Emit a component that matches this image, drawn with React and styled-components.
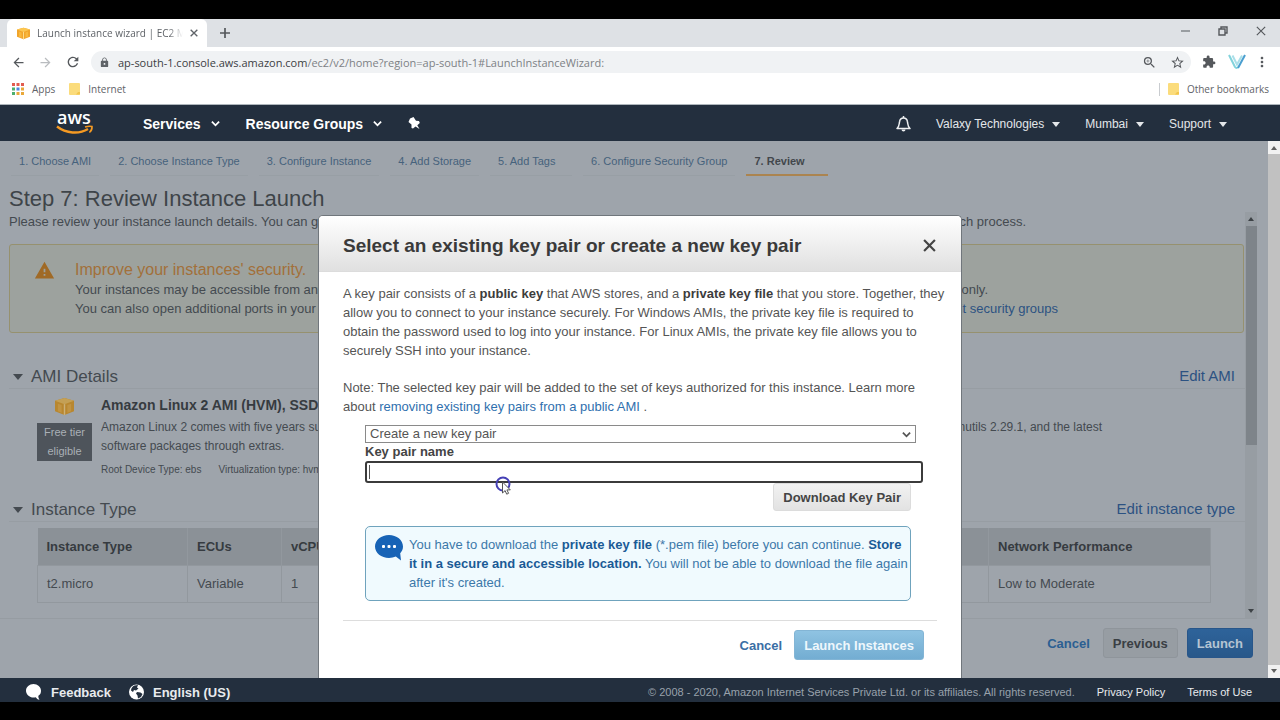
import React from 'react';
import styled, { createGlobalStyle, css } from 'styled-components';
import {
  MdArrowBack, MdArrowForward, MdRefresh, MdLock, MdZoomIn,
  MdStarBorder, MdExtension, MdMoreVert, MdWarning,
} from 'react-icons/md';

const GlobalStyle = createGlobalStyle`
  * { box-sizing: border-box; }
  html, body { margin: 0; background: #000; }
  body { font-family: "Liberation Sans", Arial, sans-serif; font-size: 13px; line-height: 19px; color: #444a50; }
  button, input, select { font-family: inherit; font-size: 13px; }
  a { text-decoration: none; color: inherit; }
  h1, h2, h3, p, ul, ol { margin: 0; padding: 0; }
  svg { display: block; flex: none; }
`;

const Page = styled.div`
  min-height: 100vh;
  display: flex;
  flex-direction: column;
  padding: 19px 0 18px;
  background: #000;
  overflow: hidden;
`;

/* Browser chrome */
const Chrome = styled.header`
  font-family: "Open Sans", "Noto Sans", sans-serif;
  font-size: 11px;
  color: #5f6368;
  background: #fff;
  border-bottom: 1px solid #aeb6bc;
`;
const TabStrip = styled.div`
  height: 28px;
  display: flex;
  background: #dee1e5;
  padding-left: 7px;
`;
const Tab = styled.div`
  width: 200px;
  height: 28px;
  display: flex;
  align-items: center;
  gap: 7px;
  padding: 0 9px 0 10px;
  background: #fff;
  border-radius: 6px 6px 0 0;
`;
const TabTitle = styled.span`
  flex: 1;
  min-width: 0;
  white-space: nowrap;
  overflow: hidden;
  font-size: 10px;
  mask-image: linear-gradient(to right, #000 90%, transparent);
`;
const IconButton = styled.button`
  display: flex;
  align-items: center;
  justify-content: center;
  width: ${(p) => p.$width || 20}px;
  height: ${(p) => p.$height || 20}px;
  padding: 0;
  border: 0;
  background: none;
  color: ${(p) => p.$color || '#55585c'};
`;
const WindowButtons = styled.div`
  margin-left: auto;
  display: flex;
  padding: 2px 0 0;
`;
const Toolbar = styled.div`
  height: 30px;
  display: flex;
  align-items: center;
  padding: 0 3px 0 5px;
`;
const NavButtons = styled.div`
  display: flex;
  width: 86px;
`;
const Address = styled.div`
  flex: 1;
  height: 22px;
  display: flex;
  align-items: center;
  gap: 8px;
  padding: 0 4px 0 8px;
  border-radius: 11px;
  background: #f0f2f4;
`;
const Url = styled.span`
  flex: 1;
  font-size: 11px;
  color: #7d8185;
  b { font-weight: 400; color: #3c4043; }
`;
const Bookmarks = styled.nav`
  height: 27px;
  display: flex;
  align-items: center;
  gap: 14px;
  padding: 0 11px 3px 12px;
  font-size: 10px;
`;
const Bookmark = styled.a`
  display: flex;
  align-items: center;
  gap: 8px;
  ${(p) => p.$end && css`
    margin-left: auto;
    border-left: 1px solid #c9ccd0;
    padding-left: 8px;
    line-height: 13px;
  `}
`;

/* AWS bar */
const AwsBar = styled.nav`
  height: 36px;
  display: flex;
  align-items: center;
  padding: 1px 53px 0 55px;
  background: #232f3e;
  color: #f2f3f3;
  font-size: 12px;
`;
const BarButton = styled.button`
  display: flex;
  align-items: center;
  gap: ${(p) => (p.$strong ? 10 : 8)}px;
  padding: 0;
  border: 0;
  background: none;
  color: ${(p) => (p.$strong ? '#fff' : '#e4e7ea')};
  font-size: ${(p) => (p.$strong ? 14 : 12)}px;
  font-weight: ${(p) => (p.$strong ? 700 : 400)};
`;
const BarLeft = styled.div`
  display: flex;
  align-items: center;
  gap: 26px;
  margin-left: 49px;
`;
const BarRight = styled.div`
  display: flex;
  align-items: center;
  gap: 25px;
  padding-top: 1px;
  margin-left: auto;
`;

/* Console body */
const Body = styled.div`
  position: relative;
  flex: 1;
  display: flex;
  background: #9ea4ab;
`;
const Console = styled.main`
  flex: 1;
  min-width: 0;
  display: flex;
  flex-direction: column;
`;
const Steps = styled.ol`
  display: flex;
  gap: 11px;
  padding: 11px 11px 0;
  list-style: none;
`;
const Step = styled.li`
  min-width: 82px;
  padding: 0 8px 3px;
  font-size: 11px;
  border-bottom: ${(p) => (p.$active ? '2px solid #ab8450' : '1px solid #989fa5')};
  font-weight: ${(p) => (p.$active ? 700 : 400)};
  color: ${(p) => (p.$active ? '#42474c' : '#46627c')};
`;
const Title = styled.h1`
  padding: 9px 9px 0;
  font-size: 22px;
  line-height: 27px;
  font-weight: 400;
  color: #3e4449;
`;
const ScrollArea = styled.div`
  flex: 1;
  display: flex;
  margin-right: 11px;
  border-bottom: 1px solid #969ca2;
`;
const Scrolled = styled.div`
  flex: 1;
  min-width: 0;
`;
const SplitLine = styled.p`
  display: flex;
  justify-content: space-between;
  white-space: nowrap;
  font-size: ${(p) => p.$size || 13}px;
  padding-right: ${(p) => p.$end || 0}px;
`;
const Intro = styled.div`
  padding-left: 9px;
`;
const Warning = styled.section`
  display: flex;
  gap: 20px;
  margin: 13px 1px 0 9px;
  padding: 15px 0 13px 24px;
  min-height: 89px;
  border: 1px solid #96916f;
  border-radius: 3px;
  background: #9da29e;
`;
const WarningText = styled.div`
  flex: 1;
  h2 { font-size: 16px; line-height: 20px; font-weight: 400; color: #a2703a; }
`;
const BlueLink = styled.a`
  color: ${(p) => p.$color || '#2f6fae'};
`;
const Section = styled.section`
  margin-top: ${(p) => p.$gap}px;
`;
const SectionHead = styled.div`
  display: flex;
  align-items: flex-start;
  justify-content: space-between;
  margin-left: 9px;
  padding: 0 10px 1px 4px;
  border-bottom: 1px solid #979da3;
  h2 { display: flex; align-items: center; gap: 8px; font-size: 17px; line-height: 20px; font-weight: 400; }
  a { font-size: 15px; line-height: 17px; color: #2c5282; }
`;
const Ami = styled.div`
  display: flex;
  gap: 9px;
  padding: 7px 0 0 37px;
`;
const AmiBadge = styled.div`
  width: 55px;
  display: flex;
  flex-direction: column;
  align-items: center;
  gap: 7px;
  padding-top: 1px;
`;
const FreeTier = styled.span`
  width: 55px;
  height: 38px;
  text-align: center;
  font-size: 11px;
  background: #4e545b;
  color: #aab0b6;
`;
const AmiText = styled.div`
  flex: 1;
  overflow: hidden;
  h3 { font-size: 14px; line-height: 19px; margin-bottom: 3px; color: #363b40; white-space: nowrap; }
`;
const Meta = styled.p`
  display: flex;
  gap: 17px;
  margin-top: 4px;
  font-size: 10px;
  white-space: nowrap;
`;
const Table = styled.table`
  width: calc(100% - 71px);
  margin: 6px 0 0 37px;
  table-layout: fixed;
  border-collapse: collapse;
  text-align: left;
  th, td { height: 37px; padding: 0 9px; border-right: 1px solid #92989e; }
  th { background: #8b9197; color: #363b40; }
  td { border: 1px solid #92989e; }
`;
const Col = styled.col`
  width: ${(p) => p.$width}px;
`;
const WizardActions = styled.div`
  display: flex;
  justify-content: flex-end;
  align-items: center;
  gap: 9px;
  padding: 9px 15px 20px;
`;
const Button = styled.button`
  height: ${(p) => p.$height || 30}px;
  padding: 0 9px;
  font-weight: 700;
  border-radius: 3px;
  border: 1px solid transparent;
  white-space: nowrap;
  ${(p) => ({
    link: css`background: none; border: 0; padding: 0 4px; color: ${p.$color || '#2b5f92'};`,
    muted: css`background: #979da3; border-color: #8f959b; color: #3a3f44;`,
    launch: css`background: linear-gradient(#2e639a, #28588a); border-color: #28568a; color: #b5c4d3;`,
    plain: css`background: linear-gradient(#f2f2f2, #e2e2e2); border-color: #dcdcdc; color: #444;`,
    pale: css`background: linear-gradient(#8fc3e2, #73add2); border-color: #83b5d5; color: #eef7fc;`,
  }[p.$kind])}
`;

/* Scroll bars */
const Bar = styled.div`
  width: 12px;
  display: flex;
  flex-direction: column;
  align-items: center;
  background: ${(p) => (p.$dim ? '#979da3' : '#f1f1f1')};
  color: ${(p) => (p.$dim ? '#3d4246' : '#606060')};
`;
const BarArrow = styled.span`
  height: 14px;
  display: flex;
  align-items: center;
`;
const Thumb = styled.span`
  width: ${(p) => (p.$dim ? 11 : 12)}px;
  flex: 0 0 ${(p) => p.$share}%;
  background: ${(p) => (p.$dim ? '#7e848a' : '#c1c1c1')};
  margin-bottom: auto;
`;

/* Dialog */
const Overlay = styled.div`
  position: absolute;
  inset: 0;
  z-index: 3;
  display: flex;
  justify-content: center;
  padding-top: 74px;
  pointer-events: none;
`;
const Dialog = styled.div`
  width: 644px;
  display: flex;
  flex-direction: column;
  background: #fff;
  border: 1px solid #70767c;
  border-bottom: 0;
  border-radius: 5px 5px 0 0;
  overflow: hidden;
  pointer-events: auto;
`;
const DialogHead = styled.div`
  display: flex;
  align-items: center;
  justify-content: space-between;
  height: 56px;
  padding: 3px 20px 0 24px;
  background: linear-gradient(#fff, #e0e0e0);
  border-bottom: 1px solid #dcdcdc;
  h2 { font-size: 19px; color: #3a3a3a; }
`;
const DialogBody = styled.div`
  padding: 12px 24px 0 24px;
  color: #555;
  b { color: #3c3c3c; }
`;
const Copy = styled.p`
  margin-bottom: ${(p) => p.$gap}px;
  white-space: nowrap;
`;
const Form = styled.form`
  position: relative;
  display: flex;
  flex-direction: column;
  align-items: stretch;
  margin: 0 14px 0 22px;
`;
const SelectBox = styled.div`
  display: flex;
  align-items: center;
  margin-right: 7px;
  height: 18px;
  border: 1px solid #8a8a8a;
  select {
    appearance: none;
    flex: 1;
    height: 16px;
    padding: 0 4px;
    border: 0;
    border-radius: 0;
    background: #fff;
    color: #555;
    line-height: 16px;
  }
  svg { margin: 0 4px 0 -13px; pointer-events: none; }
`;
const NameLabel = styled.label`
  font-weight: 700;
  line-height: 18px;
  color: #444;
`;
const NameInput = styled.input`
  height: 22px;
  padding: 0 5px;
  border: 2px solid #3b3b3b;
  border-radius: 3px;
  outline: 0;
  background: linear-gradient(#555, #555) 2px 2px / 1px 14px no-repeat #fff;
`;
const DownloadRow = styled.div`
  display: flex;
  justify-content: flex-end;
  padding-right: 12px;
`;
const Info = styled.div`
  display: flex;
  gap: 6px;
  margin: 15px 12px 0 0;
  padding: 8px 0 8px 9px;
  border: 1px solid #6fa3bd;
  border-radius: 5px;
  background: #f0fafe;
  color: #3c78a9;
  white-space: nowrap;
  b { color: #1a5a96; }
`;
const DialogActions = styled.div`
  display: flex;
  justify-content: flex-end;
  gap: 8px;
  margin: 19px 0 0;
  padding: 9px 13px 0 0;
  border-top: 1px solid #ddd;
`;
const Pointer = styled.svg`
  position: absolute;
  left: 130px;
  top: 50px;
`;

/* Footer */
const Footer = styled.footer`
  height: 24px;
  display: flex;
  align-items: center;
  gap: 22px;
  padding: 4px 28px 0 26px;
  background: #232f3e;
  font-size: 11px;
  color: #98a1ab;
  a { color: #e8ebee; }
`;
const FooterLink = styled.a`
  display: flex;
  align-items: center;
  gap: 9px;
  font-size: 13px;
  font-weight: 700;
`;
const FooterGroup = styled.div`
  display: flex;
  gap: ${(p) => p.$gap}px;
  &:last-child { margin-left: auto; }
`;

const Cube = ({ size, dim }) => (
  <svg width={size} height={size} viewBox="0 0 20 18" aria-hidden="true">
    <path d="M10 0 20 3V14L10 18 0 14V3z" fill={dim ? '#b8872f' : '#f1a42b'} />
    <path d="M10 0 20 3 10 6.500 0 3z" fill={dim ? '#c4a055' : '#fcc650'} />
    <path d="M3 6 7 7.500V15.500L3 14zM17 6 13 7.500V15.500L17 14z" fill={dim ? '#c19443' : '#f9b83c'} />
    <path d="M10 6.500V18" stroke={dim ? '#cbb078' : '#fddc8c'} strokeWidth="1.500" />
  </svg>
);
const Triangle = ({ w = 9, h = 5, up }) => (
  <svg width={w} height={h} viewBox="0 0 10 6" preserveAspectRatio="none" aria-hidden="true">
    <path d={up ? 'M0 6h10L5 0z' : 'M0 0h10L5 6z'} fill="currentColor" />
  </svg>
);
const Chevron = ({ w = 9 }) => (
  <svg width={w} height={w} viewBox="0 0 10 10" fill="none" stroke="currentColor" strokeWidth="2" aria-hidden="true">
    <path d="M1 3l4 4 4-4" />
  </svg>
);
const Cross = ({ size, stroke }) => (
  <svg width={size} height={size} viewBox="0 0 12 12" stroke="currentColor" strokeWidth={stroke} aria-hidden="true">
    <path d="M1 1l10 10M11 1 1 11" />
  </svg>
);
const Folder = () => (
  <svg width="11" height="12" viewBox="0 0 11 12" aria-hidden="true">
    <rect width="11" height="12" rx="1" fill="#fbdc7c" />
    <path d="M9 9h2v2.500H7z" fill="#f2c54e" />
  </svg>
);
const AppsGrid = () => {
  const colors = ['#e25c50', '#e25c50', '#e25c50', '#4caf6e', '#4a86e0', '#e9a83a', '#4caf6e', '#e9a83a', '#e9a83a'];
  return (
    <svg width="12" height="12" viewBox="0 0 12 12" aria-hidden="true">
      {colors.map((c, i) => (
        <rect key={i} x={(i % 3) * 4.5} y={Math.floor(i / 3) * 4.5} width="3" height="3" fill={c} />
      ))}
    </svg>
  );
};
const AwsLogo = () => (
  <svg width="39" height="36" viewBox="0 -5 39 36" role="img" aria-label="aws">
    <text x="2" y="13" fontFamily="Open Sans, sans-serif" fontSize="18" fontWeight="600" fill="#fff">aws</text>
    <path d="M2 15.500c9 7 22 8 31 2.500" fill="none" stroke="#f59a23" strokeWidth="2.400" />
    <path d="M30 16c3-1 5-1 7-.5.2 2-.8 4.500-2.600 6" fill="none" stroke="#f59a23" strokeWidth="1.600" />
  </svg>
);
const Pin = () => (
  <svg width="12" height="13" viewBox="0 0 12 13" fill="#fff" aria-hidden="true">
    <path d="M2 1.500 5.500 0 8 3.800 11 4l.8 2-2.500 2.200L11.500 12 7.500 9.500 5 11.500 3.500 11V7.500L.5 5z" />
  </svg>
);
const Bell = () => (
  <svg width="15" height="16" viewBox="0 0 15 16" fill="none" stroke="#eef0f2" strokeWidth="1.500" aria-hidden="true">
    <path d="M1 12.500c2.500-2 2-4.500 2.600-7C4 3.300 5.500 2 7.500 2s3.500 1.300 3.900 3.500c.6 2.500.1 5 2.600 7z" strokeLinejoin="round" />
    <path d="M7.500 0v2" />
    <path d="M5.500 13.500a2 2 0 0 0 4 0z" fill="#eef0f2" stroke="none" />
  </svg>
);
const VLogo = () => (
  <svg width="18" height="16" viewBox="0 0 18 16" fill="none" strokeWidth="2" aria-hidden="true">
    <path d="M4.500 1.500l4.500 9 5-9" stroke="#aadfe9" />
    <path d="M1 1l6 12q1.500 2 3 0" stroke="#82d3dc" />
    <path d="M17 1l-7 13" stroke="#4b9fd0" />
  </svg>
);
const Bubble = () => (
  <svg width="28" height="26" viewBox="0 0 28 26" aria-hidden="true">
    <path d="M14 0C6.300 0 0 5 0 11.500S6.300 23 14 23c2.500 0 4.800-.5 6.800-1.400L26 25.500l-.8-7.200c1.700-1.900 2.800-4.200 2.800-6.800C28 5 21.700 0 14 0z" fill="#1763b6" />
    <g fill="#fff">
      <rect x="7" y="10" width="3" height="3" rx="1" />
      <rect x="12.500" y="10" width="3" height="3" rx="1" />
      <rect x="18" y="10" width="3" height="3" rx="1" />
    </g>
  </svg>
);
const FeedbackIcon = () => (
  <svg width="16" height="16" viewBox="0 0 16 16" fill="#fff" aria-hidden="true">
    <path d="M7.500 0C3.400 0 0 3 0 6.700S3.400 13.500 7.500 13.500c.8 0 1.500-.1 2.200-.3.800 1.200 2 2.300 3.800 2.600-.9-1.200-1.300-2.500-1.100-4C14.300 10.600 15 8.800 15 6.700 15 3 11.600 0 7.500 0z" />
  </svg>
);
const Globe = () => (
  <svg width="15" height="16" viewBox="0 0 15 16" aria-hidden="true">
    <circle cx="7.500" cy="8" r="7.500" fill="#fff" />
    <path d="M5.500 1.500 9 1l-1 2.500 1.500 1L7 6.500 5 6 4 8 2 6.500C2.200 4 3.500 2.500 5.500 1.500zM8 8l3.500.5 2 1.500-1.500 3-3 1.500-.5-3L7 9.500z" fill="#232f3e" />
  </svg>
);

const STEPS = ['Choose AMI', 'Choose Instance Type', 'Configure Instance', 'Add Storage', 'Add Tags', 'Configure Security Group', 'Review'];

export default function App() {
  return (
    <Page>
      <GlobalStyle />
      <Chrome>
        <TabStrip>
          <Tab>
            <Cube size={13} />
            <TabTitle>Launch instance wizard | EC2 Management</TabTitle>
            <Cross size={8} stroke={2} />
          </Tab>
          <IconButton $width={36} $height={28} aria-label="New tab">
            <svg width="10" height="10" viewBox="0 0 10 10" stroke="currentColor" strokeWidth="1.700"><path d="M5 0v10M0 5h10" /></svg>
          </IconButton>
          <WindowButtons>
            <IconButton $width={38} aria-label="Minimize">
              <svg width="9" height="2" viewBox="0 0 9 2"><path d="M0 .5h9v1H0z" fill="currentColor" /></svg>
            </IconButton>
            <IconButton $width={38} aria-label="Restore">
              <svg width="10" height="10" viewBox="0 0 10 10" fill="none" stroke="currentColor" strokeWidth="1.400"><path d="M1 3h6v6H1zM3 3V1h6v6H7" /></svg>
            </IconButton>
            <IconButton $width={38} aria-label="Close window"><Cross size={10} stroke={1.4} /></IconButton>
          </WindowButtons>
        </TabStrip>
        <Toolbar>
          <NavButtons>
            <IconButton $width={27} aria-label="Back"><MdArrowBack size={15} /></IconButton>
            <IconButton $width={27} $color="#b9bcbf" aria-label="Forward"><MdArrowForward size={15} /></IconButton>
            <IconButton $width={27} aria-label="Reload"><MdRefresh size={16} /></IconButton>
          </NavButtons>
          <Address>
            <MdLock size={11} />
            <Url><b>ap-south-1.console.aws.amazon.com</b>/ec2/v2/home?region=ap-south-1#LaunchInstanceWizard:</Url>
            <IconButton aria-label="Zoom"><MdZoomIn size={15} /></IconButton>
            <IconButton aria-label="Bookmark"><MdStarBorder size={15} /></IconButton>
          </Address>
          <IconButton $width={36} aria-label="Extensions"><MdExtension size={14} /></IconButton>
          <IconButton $width={20} aria-label="Profile"><VLogo /></IconButton>
          <IconButton $width={30} aria-label="Menu"><MdMoreVert size={16} /></IconButton>
        </Toolbar>
        <Bookmarks>
          <Bookmark href="#apps"><AppsGrid />Apps</Bookmark>
          <Bookmark href="#internet"><Folder />Internet</Bookmark>
          <Bookmark href="#other" $end><Folder />Other bookmarks</Bookmark>
        </Bookmarks>
      </Chrome>

      <AwsBar>
        <AwsLogo />
        <BarLeft>
          <BarButton $strong>Services <Chevron /></BarButton>
          <BarButton $strong>Resource Groups <Chevron /></BarButton>
          <BarButton aria-label="Pin shortcuts"><Pin /></BarButton>
        </BarLeft>
        <BarRight>
          <BarButton aria-label="Notifications"><Bell /></BarButton>
          <BarButton>Valaxy Technologies <Triangle w={8} h={5} /></BarButton>
          <BarButton>Mumbai <Triangle w={8} h={5} /></BarButton>
          <BarButton>Support <Triangle w={8} h={5} /></BarButton>
        </BarRight>
      </AwsBar>

      <Body>
        <Console>
          <Steps>
            {STEPS.map((s, i) => (
              <Step key={s} $active={i === 6}>{i + 1}. {s}</Step>
            ))}
          </Steps>
          <Title>Step 7: Review Instance Launch</Title>
          <ScrollArea>
            <Scrolled>
              <Intro>
                <SplitLine $end={219}>
                  <span>Please review your instance launch details. You can go</span>
                  <span>launch process.</span>
                </SplitLine>
              </Intro>
              <Warning>
                <MdWarning size={21} color="#a06a26" />
                <WarningText>
                  <h2>Improve your instances' security.</h2>
                  <SplitLine $end={255}>
                    <span>Your instances may be accessible from any</span>
                    <span>only.</span>
                  </SplitLine>
                  <SplitLine $end={185}>
                    <span>You can also open additional ports in your s</span>
                    <BlueLink href="#groups" $color="#2c5282">Edit security groups</BlueLink>
                  </SplitLine>
                </WarningText>
              </Warning>

              <Section $gap={34}>
                <SectionHead>
                  <h2><Triangle w={10} h={6} />AMI Details</h2>
                  <a href="#edit-ami">Edit AMI</a>
                </SectionHead>
                <Ami>
                  <AmiBadge>
                    <Cube size={19} dim />
                    <FreeTier>Free tier eligible</FreeTier>
                  </AmiBadge>
                  <AmiText>
                    <h3>Amazon Linux 2 AMI (HVM), SSD</h3>
                    <SplitLine $size={12} $end={143}>
                      <span>Amazon Linux 2 comes with five years su</span>
                      <span>Binutils 2.29.1, and the latest</span>
                    </SplitLine>
                    <SplitLine $size={12}>software packages through extras.</SplitLine>
                    <Meta><span>Root Device Type: ebs</span><span>Virtualization type: hvm</span></Meta>
                  </AmiText>
                </Ami>
              </Section>

              <Section $gap={21}>
                <SectionHead>
                  <h2><Triangle w={10} h={6} />Instance Type</h2>
                  <a href="#edit-type">Edit instance type</a>
                </SectionHead>
                <Table>
                  <colgroup><Col $width={150} /><Col $width={94} /><col /><Col $width={222} /></colgroup>
                  <thead>
                    <tr><th>Instance Type</th><th>ECUs</th><th>vCPUs</th><th>Network Performance</th></tr>
                  </thead>
                  <tbody>
                    <tr><td>t2.micro</td><td>Variable</td><td>1</td><td>Low to Moderate</td></tr>
                  </tbody>
                </Table>
              </Section>
            </Scrolled>
            <Bar $dim>
              <BarArrow><Triangle w={6} h={4} up /></BarArrow>
              <Thumb $dim $share={54} />
              <BarArrow><Triangle w={6} h={4} /></BarArrow>
            </Bar>
          </ScrollArea>
          <WizardActions>
            <Button $kind="link">Cancel</Button>
            <Button $kind="muted">Previous</Button>
            <Button $kind="launch">Launch</Button>
          </WizardActions>
        </Console>
        <Bar>
          <BarArrow><Triangle w={6} h={4} up /></BarArrow>
          <Thumb $share={95} />
          <BarArrow><Triangle w={6} h={4} /></BarArrow>
        </Bar>

        <Overlay>
          <Dialog role="dialog" aria-labelledby="dialog-title">
            <DialogHead>
              <h2 id="dialog-title">Select an existing key pair or create a new key pair</h2>
              <IconButton $width={24} $color="#444" aria-label="Close"><Cross size={13} stroke={2} /></IconButton>
            </DialogHead>
            <DialogBody>
              <Copy $gap={18}>
                A key pair consists of a <b>public key</b> that AWS stores, and a <b>private key file</b> that you store. Together, they<br />
                allow you to connect to your instance securely. For Windows AMIs, the private key file is required to<br />
                obtain the password used to log into your instance. For Linux AMIs, the private key file allows you to<br />
                securely SSH into your instance.
              </Copy>
              <Copy $gap={9}>
                Note: The selected key pair will be added to the set of keys authorized for this instance. Learn more<br />
                about <BlueLink href="#removing">removing existing key pairs from a public AMI</BlueLink> .
              </Copy>
              <Form onSubmit={(e) => e.preventDefault()}>
                <SelectBox>
                  <select aria-label="Key pair option" defaultValue="new">
                    <option value="new">Create a new key pair</option>
                  </select>
                  <Chevron />
                </SelectBox>
                <NameLabel htmlFor="key-name">Key pair name</NameLabel>
                <NameInput id="key-name" type="text" />
                <DownloadRow><Button type="button" $kind="plain" $height={28}>Download Key Pair</Button></DownloadRow>
                <Info>
                  <Bubble />
                  <div>
                    You have to download the <b>private key file</b> (*.pem file) before you can continue. <b>Store</b><br />
                    <b>it in a secure and accessible location.</b> You will not be able to download the file again<br />
                    after it's created.
                  </div>
                </Info>
                <Pointer width="18" height="22" viewBox="0 0 18 22" aria-hidden="true">
                  <circle cx="8" cy="9" r="6.500" fill="none" stroke="#4540b5" strokeWidth="2" />
                  <path d="M7.500 7v11l2.600-2.400 1.600 3.600 1.900-.9-1.700-3.400h3.400z" fill="#fff" stroke="#555" strokeWidth="1" />
                </Pointer>
              </Form>
              <DialogActions>
                <Button $kind="link" $color="#3a6ea5">Cancel</Button>
                <Button $kind="pale">Launch Instances</Button>
              </DialogActions>
            </DialogBody>
          </Dialog>
        </Overlay>
      </Body>

      <Footer>
        <FooterGroup $gap={18}>
          <FooterLink href="#feedback"><FeedbackIcon />Feedback</FooterLink>
          <FooterLink href="#language"><Globe />English (US)</FooterLink>
        </FooterGroup>
        <FooterGroup $gap={22}>
          <span>© 2008 - 2020, Amazon Internet Services Private Ltd. or its affiliates. All rights reserved.</span>
          <a href="#privacy">Privacy Policy</a>
          <a href="#terms">Terms of Use</a>
        </FooterGroup>
      </Footer>
    </Page>
  );
}
